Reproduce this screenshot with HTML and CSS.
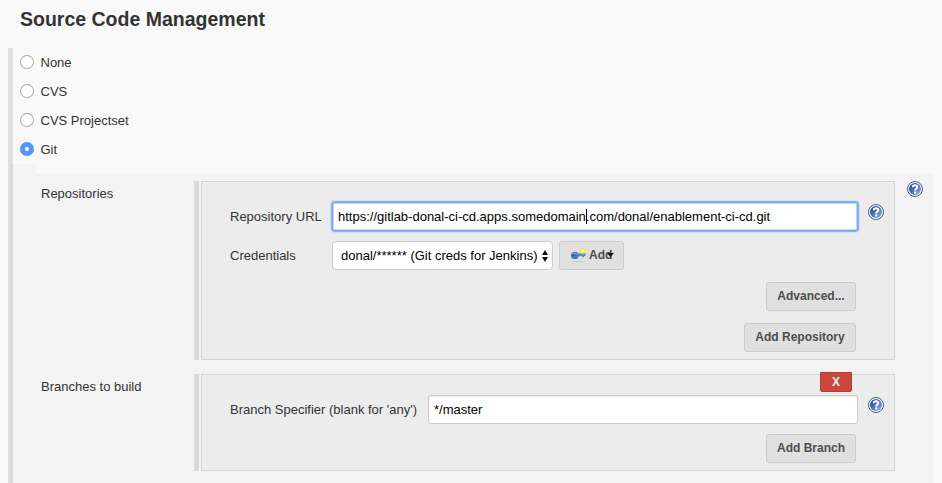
FILE: index.html
```html
<!DOCTYPE html>
<html lang="en">
<head>
<meta charset="utf-8">
<title>Source Code Management</title>
<link rel="stylesheet" href="styles.css">
</head>
<body>
<svg class="defs" width="0" height="0" aria-hidden="true">
  <defs>
    <linearGradient id="blue" x1="0" y1="0" x2="1" y2="1">
      <stop offset="0.2" stop-color="#2c4c94"/><stop offset="0.9" stop-color="#8ca9da"/>
    </linearGradient>
    <symbol id="help" viewBox="0 0 16 16">
      <circle cx="8" cy="8" r="7.5" fill="#fff" stroke="#3d599b" stroke-width="1"/>
      <circle cx="8" cy="8" r="6" fill="url(#blue)"/>
      <path d="M5.7 6.3C5.8 3.5 10.3 3.5 10.3 6C10.3 7.5 8.2 7.5 8.2 9.5" fill="none" stroke="#fff" stroke-width="2"/>
      <rect x="7.1" y="10.4" width="2.1" height="2" fill="#fff"/>
    </symbol>
  </defs>
</svg>
<h2 class="title"><span>Source Code Management</span></h2>
<div class="radios">
  <label class="option"><i class="radio"></i>None</label>
  <label class="option"><i class="radio"></i>CVS</label>
  <label class="option"><i class="radio"></i>CVS Projectset</label>
  <label class="option"><i class="radio checked"></i>Git</label>
</div>
<div class="git">
  <div class="git-inner">
    <div class="tab"></div>
    <div class="panel">
      <section class="row repos">
        <div class="row-label">Repositories</div>
        <div class="rail"></div>
        <div class="box">
          <div class="field url">
            <span class="name">Repository URL</span>
            <div class="input focused"><span class="url-start">https://gitlab-donal-ci-cd.apps.somedomain</span><i class="caret"></i><span class="url-end">.com/donal/enablement-ci-cd.git</span></div>
            <svg class="help" width="16" height="16"><use href="#help"/></svg>
          </div>
          <div class="field creds">
            <span class="name">Credentials</span>
            <div class="select"><span>donal/****** (Git creds for Jenkins)</span>
              <svg width="6" height="12" viewBox="0 0 6 12"><path d="M3 0L6 5H0ZM0 7H6L3 12Z" fill="#111"/></svg>
            </div>
            <button class="btn add"><svg width="16" height="16" viewBox="0 0 16 16">
              <ellipse cx="8" cy="14.8" rx="6" ry="0.8" fill="#cdcdcd"/>
              <path d="M6 6.3H15.5V9H14V10.2H12.5V9.2H6Z" fill="#5f83bb"/>
              <ellipse cx="4.8" cy="8.4" rx="3.9" ry="3.6" fill="#4c78bd"/>
              <path d="M2 7Q4.5 5 7.5 7H15" fill="none" stroke="#86a7d6"/>
              <circle cx="3.1" cy="8.4" r="0.8" fill="#294e86"/>
              <circle cx="12.5" cy="4" r="2.6" fill="#f7ef35"/><circle cx="12.5" cy="4" r="1.1" fill="#fffbb0"/>
            </svg><span>Add</span><svg class="arrow" width="7" height="4" viewBox="0 0 7 4"><path d="M0 0H7L3.5 4Z" fill="#111"/></svg></button>
          </div>
          <div class="actions"><button class="btn advanced">Advanced...</button></div>
          <div class="actions last"><button class="btn add-repo">Add Repository</button></div>
        </div>
        <svg class="help outer" width="16" height="16"><use href="#help"/></svg>
      </section>
      <section class="row branches">
        <div class="row-label">Branches to build</div>
        <div class="rail"></div>
        <div class="box">
          <button class="remove">X</button>
          <div class="field branch">
            <span class="name wide">Branch Specifier (blank for 'any')</span>
            <div class="input"><span>*/master</span></div>
            <svg class="help" width="16" height="16"><use href="#help"/></svg>
          </div>
          <div class="actions"><button class="btn add-branch">Add Branch</button></div>
        </div>
      </section>
    </div>
  </div>
</div>
</body>
</html>
```
FILE: styles.css
```css
* { box-sizing: border-box; }
html { overflow: hidden; }
body {
  margin: 0;
  height: 483px;
  overflow: hidden;
  display: flex;
  flex-direction: column;
  background: #f9f9f9;
  color: #333;
  font: 13px/18px "Liberation Sans", Arial, sans-serif;
}
.defs { position: absolute; }
.title {
  flex: none;
  margin: 0;
  height: 48px;
  padding: 7px 0 0 20px;
  font-size: 19.5px;
  line-height: 24px;
}
.radios {
  flex: none;
  margin-left: 8px;
  border-left: 5px solid #e0e0e0;
  padding-left: 7px;
}
.option { display: flex; align-items: center; gap: 6.5px; height: 29px; }
.radio {
  width: 14px;
  height: 14px;
  margin-bottom: 1px;
  border: 1px solid #b0b0b0;
  border-top-color: #a0a0a0;
  border-radius: 50%;
  background: #fff;
}
.radio.checked {
  border: 5px solid #5594fc;
}
.git { flex: 1; margin-left: 8px; border-left: 2px solid #e0e0e0; }
.git-inner { height: 100%; border-left: 3px solid #d9d9d9; }
.tab { width: 23px; height: 10px; background: #f3f3f3; }
.panel {
  height: 309px;
  margin-right: 9px;
  padding: 7px 0 0 28px;
  background: #f3f3f3;
}
.row { display: flex; }
.row-label { width: 153px; padding-top: 4px; }
.rail { width: 5px; margin-right: 2px; background: #d9d9d9; }
.box { position: relative; width: 694px; border: 1px solid #d3d3d3; background: #ececec; padding-left: 28px; }
.repos .box { height: 179px; padding-top: 20px; }
.branches { margin-top: 14px; }
.branches .box { height: 97px; padding-top: 20px; }
.field { display: flex; align-items: center; height: 29px; }
.name { width: 102px; flex: none; white-space: nowrap; }
.name.wide { width: 198px; }
.input {
  display: flex;
  align-items: center;
  height: 29px;
  flex: none;
  width: 526px;
  padding: 0 5px;
  border: 1px solid #ccc;
  border-radius: 3px;
  background: #fff;
  box-shadow: inset 0 1px 1px #eee;
  color: #000;
  white-space: nowrap;
}
.branch .input { width: 430px; }
.input.focused { border-color: #7ba7f2; box-shadow: 0 0 0 1px #8bb0f5, 0 0 2px 1px #9dbcf5, inset 0 0 0 1px #c3d7fb; }
.caret { width: 1px; height: 15px; margin-right: -1px; background: #000; }
.help { flex: none; margin-left: 10px; margin-top: -9px; }
.help.outer { margin: 0 0 0 12px; }
.creds { margin-top: 10px; }
.select {
  display: flex;
  align-items: center;
  justify-content: space-between;
  width: 221px;
  height: 29px;
  padding: 0 4px 0 8px;
  margin-right: 6px;
  border: 1px solid #ccc;
  border-radius: 4px;
  background: #fff;
  color: #000;
  white-space: nowrap;
}
.btn {
  display: flex;
  align-items: center;
  justify-content: center;
  height: 29px;
  padding: 0 0 2px;
  border: 1px solid #ccc;
  border-radius: 3px;
  background: #e0e0e0;
  color: #4d4d4d;
  font: bold 12px/18px "Liberation Sans", Arial, sans-serif;
  white-space: nowrap;
}
.add { width: 65px; padding-left: 10px; justify-content: flex-start; }
.add span { margin-left: 3px; }
.arrow { margin-left: -5px; }
.actions { display: flex; justify-content: flex-end; margin: 12px 38px 0 0; }
.advanced, .add-branch { width: 90px; }
.add-repo { width: 112px; }
.branches .actions { margin-top: 10px; }
.remove {
  position: absolute;
  top: -3px;
  right: 42px;
  width: 32px;
  height: 20px;
  padding: 0;
  border: 1px solid #b53b35;
  border-radius: 0 0 2px 2px;
  background: #c9493f;
  color: #eee;
  font: bold 12px/17px "Liberation Sans", Arial, sans-serif;
}
```
